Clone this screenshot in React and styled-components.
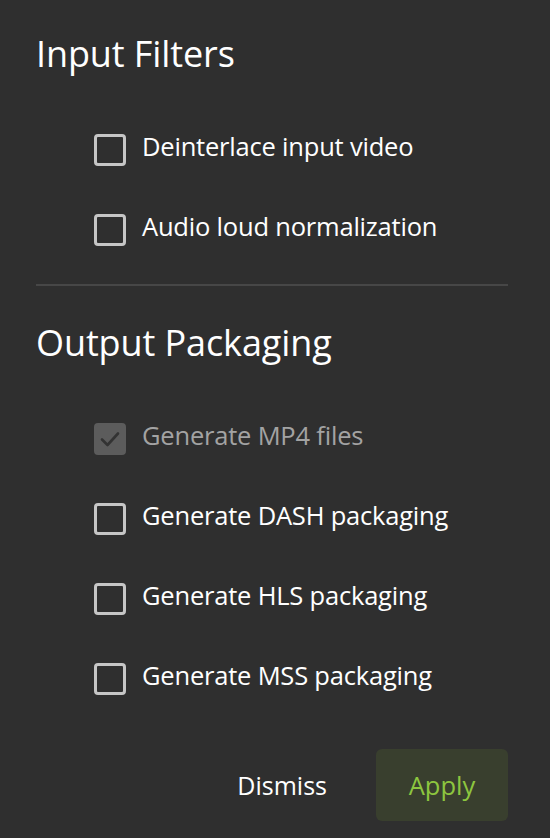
import React from "react";
import styled, { createGlobalStyle } from "styled-components";

const Global = createGlobalStyle`
  html, body { margin: 0; padding: 0; background: #2f2f2f; }
  body { font-family: "Open Sans", "Liberation Sans", sans-serif; }
`;

const Panel = styled.div`
  width: 550px;
  height: 838px;
  box-sizing: border-box;
  background: #2f2f2f;
  padding: 32px 42px 0 36px;
  display: flex;
  flex-direction: column;
`;

const Heading = styled.h2`
  margin: 0;
  font-size: 36px;
  font-weight: 400;
  color: #ffffff;
  line-height: 44px;
  letter-spacing: -0.1px;
  white-space: nowrap;
`;

const List = styled.div`
  display: flex;
  flex-direction: column;
  gap: 48px;
  padding-left: 58px;
  margin-top: 58px;
`;

const Row = styled.label`
  display: flex;
  align-items: center;
  gap: 16px;
  height: 32px;
  color: ${(p) => (p.disabled ? "#a3a3a3" : "#ffffff")};
  font-size: 25.5px;
  letter-spacing: -0.2px;
  white-space: nowrap;
`;

const LabelText = styled.span`
  line-height: 32px;
  margin-bottom: 9px;
`;

const Box = styled.span`
  width: 32px;
  height: 32px;
  box-sizing: border-box;
  border-radius: 4px;
  border: 3px solid ${(p) => (p.checked ? "#5c5c5c" : "#c6c6c6")};
  background: ${(p) => (p.checked ? "#5c5c5c" : "transparent")};
  display: flex;
  align-items: center;
  justify-content: center;
  flex: none;
`;

const Divider = styled.hr`
  border: none;
  height: 2px;
  background: #474747;
  margin: 38px 0 35px 0;
  flex: none;
`;

const Footer = styled.div`
  display: flex;
  justify-content: flex-end;
  align-items: center;
  gap: 49px;
  margin-top: 54px;
`;

const TextButton = styled.button`
  background: none;
  border: none;
  padding: 0;
  color: #ffffff;
  font-family: inherit;
  font-size: 25px;
`;

const PrimaryButton = styled.button`
  width: 132px;
  height: 72px;
  border: none;
  border-radius: 6px;
  background: #393f2e;
  color: #8dc63f;
  font-family: inherit;
  font-size: 25.5px;
`;

const Check = () => (
  <svg width="22" height="22" viewBox="0 0 22 22">
    <path d="M3 11.5 L8.5 17 L19 5.5" fill="none" stroke="#333" strokeWidth="2.6" strokeLinecap="round" strokeLinejoin="round" />
  </svg>
);

const Item = ({ label, checked, disabled }) => (
  <Row disabled={disabled}>
    <Box checked={checked}>{checked && <Check />}</Box>
    <LabelText>{label}</LabelText>
  </Row>
);

export default function App() {
  return (
    <>
      <Global />
      <Panel>
        <Heading>Input Filters</Heading>
        <List>
          <Item label="Deinterlace input video" />
          <Item label="Audio loud normalization" />
        </List>
        <Divider />
        <Heading>Output Packaging</Heading>
        <List>
          <Item label="Generate MP4 files" checked disabled />
          <Item label="Generate DASH packaging" />
          <Item label="Generate HLS packaging" />
          <Item label="Generate MSS packaging" />
        </List>
        <Footer>
          <TextButton>Dismiss</TextButton>
          <PrimaryButton>Apply</PrimaryButton>
        </Footer>
      </Panel>
    </>
  );
}
